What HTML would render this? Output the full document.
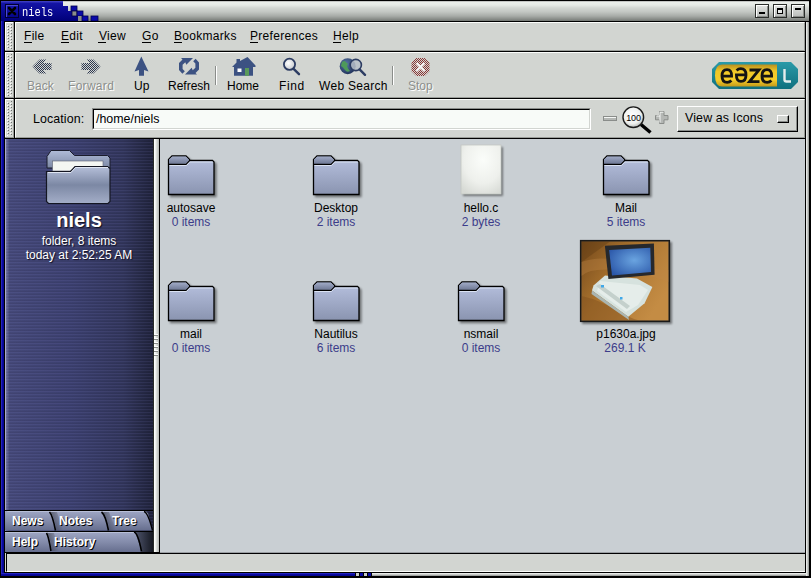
<!DOCTYPE html>
<html><head><meta charset="utf-8">
<style>
html,body{margin:0;padding:0;}
body{width:811px;height:578px;overflow:hidden;position:relative;background:#000;font-family:"Liberation Sans",sans-serif;font-size:12px;color:#000;}
.a{position:absolute;}
.t{position:absolute;white-space:nowrap;line-height:14px;}
.g{background:#d2d5d1;}
.hd{position:absolute;left:5px;width:9px;box-sizing:border-box;}
.u{text-decoration:underline;text-underline-offset:2px;}
</style></head><body>
<!-- outer frame -->
<div class="a" style="left:1px;top:1px;width:3px;height:575px;background:linear-gradient(90deg,#3a3acc,#0a0aa4 40%,#040488)"></div>
<div class="a" style="left:1px;top:573px;width:354px;height:3px;background:linear-gradient(#3232d0,#0808a0 50%,#040488)"></div>
<div class="a" style="left:356px;top:573px;width:3px;height:3px;background:#c8cbc8"></div>
<div class="a" style="left:360px;top:573px;width:3px;height:3px;background:#0a0aa8"></div>
<div class="a" style="left:364px;top:573px;width:3px;height:3px;background:#c8cbc8"></div>
<div class="a" style="left:368px;top:573px;width:3px;height:3px;background:#0a0aa8"></div>
<div class="a" style="left:372px;top:573px;width:437px;height:3px;background:linear-gradient(#f8faf8,#c8cbc8 50%,#8e918e)"></div>
<div class="a" style="left:806px;top:22px;width:3px;height:554px;background:linear-gradient(90deg,#f4f6f4,#c8cbc8 50%,#8e918e)"></div>

<!-- title bar -->
<div class="a" style="left:1px;top:1px;width:808px;height:20px;background:linear-gradient(#c4c6c4 0,#c4c6c4 1px,#eaeeea 1.5px,#e6eae6 4px,#d2d6d2 7px,#c2c6c2 11px,#a8aca8 15px,#8a8e8a 18px,#747874 20px)"></div>
<svg class="a" style="left:1px;top:1px" width="100" height="20" viewBox="1 1 100 20">
 <defs><linearGradient id="tb" x1="0" y1="0" x2="0" y2="1"><stop offset="0" stop-color="#4646c8"/><stop offset="0.12" stop-color="#1414a4"/><stop offset="0.5" stop-color="#0a0a94"/><stop offset="1" stop-color="#000078"/></linearGradient>
 <linearGradient id="tg" x1="0" y1="0" x2="0" y2="1"><stop offset="0" stop-color="#e8eae8"/><stop offset="1" stop-color="#9a9d9a"/></linearGradient></defs>
 <path d="M1 1H63V6H68V11H72V16H78V21H1Z" fill="url(#tb)"/>
 <rect x="71" y="6" width="6" height="5" fill="#0a0aa8" stroke="#000050" stroke-width="0.8"/>
 <rect x="72" y="11" width="5" height="5" fill="#8a8d8a" stroke="#000040" stroke-width="0.8"/>
 <rect x="77" y="11" width="6" height="5" fill="#0a0aa8" stroke="#000050" stroke-width="0.8"/>
 <rect x="78" y="16" width="4" height="5" fill="#8a8d8a"/>
 <rect x="82" y="16" width="6" height="5" fill="#0a0aa8" stroke="#000050" stroke-width="0.8"/>
 <rect x="91" y="16" width="7" height="5" fill="#0a0aa8" stroke="#000050" stroke-width="0.8"/>
</svg>
<!-- close button -->
<div class="a" style="left:5px;top:4px;width:14px;height:14px;box-sizing:border-box;border:1px solid #000030;box-shadow:inset 1px 1px 0 #4a4ad0;background:linear-gradient(#1818b0,#06068a)"></div>
<svg class="a" style="left:7px;top:6px" width="10" height="10" viewBox="0 0 10 10"><path d="M2 2L8 8M8 2L2 8" stroke="#000" stroke-width="2.6" stroke-linecap="round"/></svg>
<div class="t" style="left:22px;top:4px;font-family:'Liberation Mono',monospace;font-size:10.4px;color:#fff;line-height:14px;transform:scaleY(1.2);transform-origin:0 0">niels</div>
<!-- right buttons -->
<div class="a" style="left:755px;top:4px;width:14px;height:14px;box-sizing:border-box;border:1px solid #2a2d2a;box-shadow:inset 1px 1px 0 #fff,inset -1px -1px 0 #8a8d8a;background:linear-gradient(#e4e6e4,#b8bbb8)"></div>
<div class="a" style="left:759px;top:12px;width:6px;height:2px;background:#000"></div>
<div class="a" style="left:773px;top:4px;width:14px;height:14px;box-sizing:border-box;border:1px solid #2a2d2a;box-shadow:inset 1px 1px 0 #fff,inset -1px -1px 0 #8a8d8a;background:linear-gradient(#e4e6e4,#b8bbb8)"></div>
<div class="a" style="left:777px;top:8px;width:6px;height:6px;box-sizing:border-box;border:1px solid #000;border-top-width:2px;background:#e8eae8"></div>
<div class="a" style="left:791px;top:4px;width:14px;height:14px;box-sizing:border-box;border:1px solid #2a2d2a;box-shadow:inset 1px 1px 0 #fff,inset -1px -1px 0 #8a8d8a;background:linear-gradient(#e4e6e4,#b8bbb8)"></div>
<div class="a" style="left:795px;top:8px;width:6px;height:2px;background:#000"></div>

<!-- menubar -->
<div class="a g" style="left:15px;top:22px;width:790px;height:29px;box-sizing:border-box;border-top:1px solid #fbfdfb;border-left:1px solid #fbfdfb;border-bottom:1px solid #9a9d99;border-right:1px solid #9a9d99"></div>
<svg class="a" style="left:5px;top:22px" width="9" height="29"><defs><pattern id="hp22" x="0" y="0" width="9" height="3" patternUnits="userSpaceOnUse"><rect x="2" y="0" width="1" height="1" fill="#fff"/><rect x="3" y="1" width="1" height="1" fill="#6e716e"/><rect x="5" y="1" width="1" height="1" fill="#fff"/><rect x="6" y="2" width="1" height="1" fill="#6e716e"/></pattern></defs><rect width="9" height="29" fill="#d4d7d3"/><rect x="0" y="2" width="9" height="25" fill="url(#hp22)"/><rect width="1" height="29" fill="#fff"/><rect width="9" height="1" fill="#fff"/><rect x="8" y="0" width="1" height="29" fill="#9a9d99"/><rect x="0" y="28" width="9" height="1" fill="#9a9d99"/></svg>
<!-- toolbar -->
<div class="a g" style="left:15px;top:52px;width:790px;height:46px;box-sizing:border-box;border-top:1px solid #fbfdfb;border-left:1px solid #fbfdfb;border-bottom:1px solid #9a9d99;border-right:1px solid #9a9d99"></div>
<svg class="a" style="left:5px;top:52px" width="9" height="46"><defs><pattern id="hp52" x="0" y="0" width="9" height="3" patternUnits="userSpaceOnUse"><rect x="2" y="0" width="1" height="1" fill="#fff"/><rect x="3" y="1" width="1" height="1" fill="#6e716e"/><rect x="5" y="1" width="1" height="1" fill="#fff"/><rect x="6" y="2" width="1" height="1" fill="#6e716e"/></pattern></defs><rect width="9" height="46" fill="#d4d7d3"/><rect x="0" y="2" width="9" height="42" fill="url(#hp52)"/><rect width="1" height="46" fill="#fff"/><rect width="9" height="1" fill="#fff"/><rect x="8" y="0" width="1" height="46" fill="#9a9d99"/><rect x="0" y="45" width="9" height="1" fill="#9a9d99"/></svg>
<!-- location bar -->
<div class="a g" style="left:15px;top:99px;width:790px;height:39px;box-sizing:border-box;border-top:1px solid #fbfdfb;border-left:1px solid #fbfdfb;border-bottom:1px solid #9a9d99;border-right:1px solid #9a9d99"></div>
<svg class="a" style="left:5px;top:99px" width="9" height="39"><defs><pattern id="hp99" x="0" y="0" width="9" height="3" patternUnits="userSpaceOnUse"><rect x="2" y="0" width="1" height="1" fill="#fff"/><rect x="3" y="1" width="1" height="1" fill="#6e716e"/><rect x="5" y="1" width="1" height="1" fill="#fff"/><rect x="6" y="2" width="1" height="1" fill="#6e716e"/></pattern></defs><rect width="9" height="39" fill="#d4d7d3"/><rect x="0" y="2" width="9" height="35" fill="url(#hp99)"/><rect width="1" height="39" fill="#fff"/><rect width="9" height="1" fill="#fff"/><rect x="8" y="0" width="1" height="39" fill="#9a9d99"/><rect x="0" y="38" width="9" height="1" fill="#9a9d99"/></svg>

<!-- main: sidebar -->
<svg class="a" style="left:5px;top:139px" width="148" height="413" viewBox="5 139 148 413">
 <defs>
  <linearGradient id="sbh" x1="0" y1="0" x2="1" y2="0"><stop offset="0" stop-color="#7c80b0"/><stop offset="0.03" stop-color="#444878"/><stop offset="0.45" stop-color="#3b3f6e"/><stop offset="0.8" stop-color="#31355a"/><stop offset="1" stop-color="#1f223a"/></linearGradient>
  <pattern id="sbs" x="0" y="139" width="148" height="3" patternUnits="userSpaceOnUse"><rect width="148" height="1" fill="#8890e0" fill-opacity="0.10"/><rect y="2" width="148" height="1" fill="#000" fill-opacity="0.05"/></pattern>
  <linearGradient id="tabg" x1="0" y1="0" x2="0" y2="1"><stop offset="0" stop-color="#c8cee4"/><stop offset="0.07" stop-color="#9aa2c0"/><stop offset="0.55" stop-color="#8189a8"/><stop offset="1" stop-color="#666e8e"/></linearGradient>
  <linearGradient id="tabsh" x1="0" y1="0" x2="1" y2="0"><stop offset="0" stop-color="#000" stop-opacity="0.4"/><stop offset="1" stop-color="#000" stop-opacity="0"/></linearGradient><linearGradient id="darkr" x1="0" y1="0" x2="1" y2="0"><stop offset="0" stop-color="#50566e"/><stop offset="1" stop-color="#161922"/></linearGradient>
  <linearGradient id="bfold" x1="0" y1="0" x2="0" y2="1"><stop offset="0" stop-color="#b6c0da"/><stop offset="0.5" stop-color="#7c88a4"/><stop offset="1" stop-color="#a4aec8"/></linearGradient>
  <linearGradient id="bback" x1="0" y1="0" x2="0" y2="1"><stop offset="0" stop-color="#b0bcd8"/><stop offset="1" stop-color="#7c88a4"/></linearGradient>
 </defs>
 <rect x="5" y="139" width="148" height="392" fill="url(#sbh)"/>
 <rect x="5" y="139" width="148" height="392" fill="url(#sbs)"/>
 <rect x="5" y="139" width="1" height="392" fill="#a8a8cc"/>
 <!-- big folder -->
 <g>
  <path d="M47 156.5L51 150.5H69.5L74.5 155.5H107.5L110 158V168H47Z" fill="url(#bback)" stroke="#1a1c2c" stroke-width="1"/>
  <rect x="52.5" y="161" width="50.5" height="10" fill="#f4f6f2" stroke="#5a6070" stroke-width="0.6"/>
  <path d="M46.5 171.5H70.5L75 166.5H107.5L110 168.5V201.5L108 203.5H48.5L46.5 201.5Z" fill="url(#bfold)" stroke="#141622" stroke-width="1.2"/>
  <path d="M48 172.5H71L75.5 167.5H108" fill="none" stroke="#dfe5f2" stroke-width="1"/>
 </g>
 <!-- tabs row 2 -->
 <rect x="5" y="510" width="148" height="1" fill="#000"/><rect x="5" y="531" width="148" height="22" fill="#000"/>
 <path d="M5 532H153V552H5Z" fill="url(#tabg)"/>
 <path d="M135 532H153V552H142Z" fill="url(#darkr)"/>
 <path d="M46.5 533Q48.5 536 51 551" fill="none" stroke="#000" stroke-width="1.6"/>
 <path d="M47.5 533Q49.5 536 52 551H59L54 533Z" fill="url(#tabsh)"/>
 <path d="M134 532Q138 533 141.5 551.5" fill="none" stroke="#000" stroke-width="1.6"/>
 <rect x="5" y="552" width="148" height="1" fill="#8a8e98"/>
 <!-- tabs row 1 -->
 <path d="M5 514Q5 511 8 511H144Q147 511 148 513.5L152.5 530.5H5Z" fill="url(#tabg)"/>
 <path d="M49.5 512Q52.5 515 55.5 530.5" fill="none" stroke="#000" stroke-width="1.6"/>
 <path d="M50.5 512Q53.5 515 56.5 530.5H63L57 512Z" fill="url(#tabsh)"/>
 <path d="M101.5 512Q105.5 515 108.5 530.5" fill="none" stroke="#000" stroke-width="1.6"/>
 <path d="M102.5 512Q106.5 515 109.5 530.5H116L109 512Z" fill="url(#tabsh)"/>
 <path d="M144 511.5Q148 512.5 152.5 530.5" fill="none" stroke="#000" stroke-width="1.3"/>
</svg>
<div class="t" style="left:0;top:208px;width:158px;text-align:center;font-size:20px;line-height:24px;font-weight:bold;color:#fff;text-shadow:1px 1px 1px #101020">niels</div>
<div class="t" style="left:0;top:234px;width:158px;text-align:center;color:#fff;text-shadow:1px 1px 1px #101020">folder, 8 items</div>
<div class="t" style="left:0;top:248px;width:158px;text-align:center;color:#fff;text-shadow:1px 1px 1px #101020">today at 2:52:25 AM</div>
<div class="t" style="left:12px;top:514px;font-weight:bold;color:#fff;text-shadow:1px 1px 0 #000">News</div>
<div class="t" style="left:59px;top:514px;font-weight:bold;color:#fff;text-shadow:1px 1px 0 #000">Notes</div>
<div class="t" style="left:112px;top:514px;font-weight:bold;color:#fff;text-shadow:1px 1px 0 #000">Tree</div>
<div class="t" style="left:12px;top:535px;font-weight:bold;color:#fff;text-shadow:1px 1px 0 #000">Help</div>
<div class="t" style="left:54px;top:535px;font-weight:bold;color:#fff;text-shadow:1px 1px 0 #000">History</div>
<!-- splitter -->
<div class="a" style="left:153px;top:139px;width:6px;height:413px;background:linear-gradient(90deg,#2a2d2a 0,#2a2d2a 1px,#fcfefc 1px,#fcfefc 2px,#e4e7e4 3px,#b4b7b4 6px)"></div>
<svg class="a" style="left:154px;top:333px" width="5" height="28"><g fill="#fff"><rect x="0" y="1" width="4" height="1"/><rect x="0" y="5" width="4" height="1"/><rect x="0" y="9" width="4" height="1"/><rect x="0" y="13" width="4" height="1"/><rect x="0" y="17" width="4" height="1"/><rect x="0" y="21" width="4" height="1"/></g><g fill="#8a8d8a"><rect x="0" y="2" width="4" height="1"/><rect x="0" y="6" width="4" height="1"/><rect x="0" y="10" width="4" height="1"/><rect x="0" y="14" width="4" height="1"/><rect x="0" y="18" width="4" height="1"/><rect x="0" y="22" width="4" height="1"/></g></svg>
<!-- content -->
<div class="a" id="content" style="left:160px;top:139px;width:645px;height:413px;background:#c9cfd3"></div>
<svg class="a" style="left:160px;top:139px" width="645" height="413" viewBox="160 139 645 413">
 <defs>
  <linearGradient id="fbody" x1="0" y1="0" x2="0" y2="1"><stop offset="0" stop-color="#b8c2e0"/><stop offset="1" stop-color="#8a94b0"/></linearGradient>
  <linearGradient id="ftab" x1="0" y1="0" x2="0" y2="1"><stop offset="0" stop-color="#a0aac6"/><stop offset="1" stop-color="#6e7894"/></linearGradient>
  <radialGradient id="doc" cx="0.55" cy="0.3" r="0.8"><stop offset="0" stop-color="#fbfdfa"/><stop offset="0.6" stop-color="#eef0ec"/><stop offset="1" stop-color="#d6d9d4"/></radialGradient>
  <filter id="sh" x="-20%" y="-20%" width="150%" height="150%"><feGaussianBlur in="SourceAlpha" stdDeviation="1.3"/><feOffset dx="1.5" dy="1.5"/><feComponentTransfer><feFuncA type="linear" slope="0.45"/></feComponentTransfer><feMerge><feMergeNode/><feMergeNode in="SourceGraphic"/></feMerge></filter>
  <g id="folder">
   <path d="M168.5 160V159.5L172 156H186L189.5 159.5V160.5H212.5L214 162V194.5H168.5Z" fill="url(#fbody)" stroke="#000" stroke-width="1.3" filter="url(#sh)"/>
   <path d="M169 164V159.5L172.2 156.6H185.8L189 159.7L186 163.8Z" fill="url(#ftab)"/>
   <path d="M168.5 164.3H186L189.3 161" fill="none" stroke="#000" stroke-width="1.2"/>
   <path d="M169.5 165.5H186.5L189.8 162H212.8" fill="none" stroke="#dfe6f6" stroke-width="0.9"/>
  </g>
 </defs>
 <use href="#folder"/>
 <use href="#folder" x="145"/>
 <use href="#folder" x="435"/>
 <use href="#folder" y="126"/>
 <use href="#folder" x="145" y="126"/>
 <use href="#folder" x="290" y="126"/>
 <!-- hello.c -->
 <rect x="461" y="145" width="40" height="49" fill="url(#doc)" filter="url(#sh)"/>
 <rect x="461" y="145" width="40" height="49" fill="none" stroke="#c4c7c2" stroke-width="0.8"/>
 <!-- photo -->
 <rect x="580" y="240" width="90" height="82" fill="#2a2a2a" filter="url(#sh)"/>
 <defs>
  <linearGradient id="wood" x1="0" y1="0" x2="1" y2="0.6"><stop offset="0" stop-color="#74481a"/><stop offset="0.45" stop-color="#a8722e"/><stop offset="1" stop-color="#c48c44"/></linearGradient>
  <radialGradient id="scr" cx="0.6" cy="0.45" r="0.7"><stop offset="0" stop-color="#6aa4e0"/><stop offset="1" stop-color="#2a56a8"/></radialGradient>
  <linearGradient id="kb" x1="0" y1="0" x2="1" y2="1"><stop offset="0" stop-color="#e4ece8"/><stop offset="1" stop-color="#b8c4c0"/></linearGradient>
 </defs>
 <rect x="581.5" y="241.5" width="87" height="79" fill="url(#wood)"/>
 <path d="M581.5 262Q600 255 625 262T668.5 270V282Q640 272 615 270T581.5 276Z" fill="#c08848" opacity="0.35"/>
 <path d="M581.5 296Q600 300 620 312T650 320.5H581.5Z" fill="#7a4c1c" opacity="0.4"/>
 <path d="M581.5 241.5H610L581.5 262Z" fill="#5a3612" opacity="0.35"/>
 <path d="M593.5 285.5L605 275.5L637 278.4L652.4 286.9L644.6 303.2L628.3 316.7L592 290.4Z" fill="#d6e2de"/>
 <path d="M592 290.4L628.3 316.7L629 320L591.5 294Z" fill="#aab6b2"/>
 <path d="M600 281L640 285L648 290L638 305L626 312L597 291Z" fill="#e8f0ec" opacity="0.8"/>
 <path d="M596 286L627 309L630 306L600 284Z" fill="#c4d0cc"/>
 <rect x="601" y="285" width="3" height="2.5" fill="#40a8e8"/>
 <rect x="620" y="297" width="2.5" height="2.5" fill="#40a8e8"/>
 <path d="M604.9 245.7L653.9 243.5L654.6 274.8L608.4 279Z" fill="#26282c"/>
 <path d="M609.1 250L650.3 247.8L651 272L612 275.5Z" fill="url(#scr)"/>
 <rect x="580.5" y="240.5" width="89" height="81" fill="none" stroke="#1a1a1a" stroke-width="1.2"/>
</svg>
<div class="t" style="left:131px;top:201px;width:120px;text-align:center">autosave</div>
<div class="t" style="left:131px;top:215px;width:120px;text-align:center;color:#3c3c8a">0 items</div>
<div class="t" style="left:276px;top:201px;width:120px;text-align:center">Desktop</div>
<div class="t" style="left:276px;top:215px;width:120px;text-align:center;color:#3c3c8a">2 items</div>
<div class="t" style="left:421px;top:201px;width:120px;text-align:center">hello.c</div>
<div class="t" style="left:421px;top:215px;width:120px;text-align:center;color:#3c3c8a">2 bytes</div>
<div class="t" style="left:566px;top:201px;width:120px;text-align:center">Mail</div>
<div class="t" style="left:566px;top:215px;width:120px;text-align:center;color:#3c3c8a">5 items</div>
<div class="t" style="left:131px;top:327px;width:120px;text-align:center">mail</div>
<div class="t" style="left:131px;top:341px;width:120px;text-align:center;color:#3c3c8a">0 items</div>
<div class="t" style="left:276px;top:327px;width:120px;text-align:center">Nautilus</div>
<div class="t" style="left:276px;top:341px;width:120px;text-align:center;color:#3c3c8a">6 items</div>
<div class="t" style="left:421px;top:327px;width:120px;text-align:center">nsmail</div>
<div class="t" style="left:421px;top:341px;width:120px;text-align:center;color:#3c3c8a">0 items</div>
<div class="t" style="left:566px;top:327px;width:120px;text-align:center">p1630a.jpg</div>
<div class="t" style="left:565px;top:341px;width:120px;text-align:center;color:#3c3c8a">269.1 K</div>

<!-- status bar -->
<div class="a" style="left:5px;top:553px;width:800px;height:19px;background:#d2d5d1"></div>
<div class="a" style="left:6px;top:553px;width:799px;height:19px;box-sizing:border-box;border-top:1px solid #000;border-left:1px solid #000;border-bottom:1px solid #fbfdfb;background:#d2d5d1"></div>
<div class="a" style="left:160px;top:552px;width:645px;height:1px;background:#9a9ea2"></div>

<!-- menu text -->
<div class="t" style="left:24px;top:29px;letter-spacing:0.3px">File</div><div class="a" style="left:24px;top:42px;width:8px;height:1px;background:#000"></div>
<div class="t" style="left:61px;top:29px;letter-spacing:0.3px">Edit</div><div class="a" style="left:61px;top:42px;width:8px;height:1px;background:#000"></div>
<div class="t" style="left:99px;top:29px;letter-spacing:0.3px">View</div><div class="a" style="left:98px;top:42px;width:8px;height:1px;background:#000"></div>
<div class="t" style="left:142px;top:29px;letter-spacing:0.3px">Go</div><div class="a" style="left:142px;top:42px;width:9px;height:1px;background:#000"></div>
<div class="t" style="left:174px;top:29px;letter-spacing:0.3px">Bookmarks</div><div class="a" style="left:174px;top:42px;width:8px;height:1px;background:#000"></div>
<div class="t" style="left:250px;top:29px;letter-spacing:0.3px">Preferences</div><div class="a" style="left:250px;top:42px;width:8px;height:1px;background:#000"></div>
<div class="t" style="left:333px;top:29px;letter-spacing:0.3px">Help</div><div class="a" style="left:333px;top:42px;width:8px;height:1px;background:#000"></div>

<!-- toolbar -->
<svg class="a" style="left:15px;top:52px" width="790" height="46" viewBox="15 52 790 46">
 <defs>
  <pattern id="chk" x="0" y="0" width="2" height="2" patternUnits="userSpaceOnUse"><rect width="1" height="1" fill="#2e3850"/><rect x="1" y="1" width="1" height="1" fill="#2e3850"/></pattern>
  <pattern id="chkr" x="0" y="0" width="2" height="2" patternUnits="userSpaceOnUse"><rect width="1" height="1" fill="#8a3434"/><rect x="1" y="1" width="1" height="1" fill="#8a3434"/></pattern>
  <radialGradient id="lens" cx="0.4" cy="0.4" r="0.6"><stop offset="0" stop-color="#ffffff"/><stop offset="1" stop-color="#c8ccd0"/></radialGradient>
  <radialGradient id="globe" cx="0.4" cy="0.35" r="0.7"><stop offset="0" stop-color="#5a78a8"/><stop offset="1" stop-color="#1e3058"/></radialGradient>
 </defs>
 <!-- back -->
 <path d="M32.5 66.5L39.5 59.5L46.5 59.5L43 63H51.5V70H43L46.5 73.5H39.5Z" fill="url(#chk)"/>
 <!-- forward -->
 <path d="M100.5 66.5L93.5 59.5L86.5 59.5L90 63H81.5V70H90L86.5 73.5H93.5Z" fill="url(#chk)"/>
 <!-- up -->
 <path d="M141.3 56.5L148.5 71.5L144 70V75.8H139V70L134.5 71.5Z" fill="#3c5282"/>
 <!-- refresh -->
 <g fill="#3c5282"><path id="rfa" d="M181 58H193L186.3 64.7L185.3 62.2L182.6 64.8V69L184.8 71.3L182.4 73.8L179 70V63L182.5 59.5Z"/><path d="M181 58H193L186.3 64.7L185.3 62.2L182.6 64.8V69L184.8 71.3L182.4 73.8L179 70V63L182.5 59.5Z" transform="rotate(180 189 66.25)"/></g>
 <!-- separators -->
 <rect x="215" y="66" width="1" height="19" fill="#8a8d8a"/><rect x="216" y="66" width="1" height="19" fill="#ffffff"/>
 <rect x="392" y="66" width="1" height="19" fill="#8a8d8a"/><rect x="393" y="66" width="1" height="19" fill="#ffffff"/>
 <!-- home -->
 <g fill="#3c5282">
  <path d="M232 67L236.5 62.5V59H240V61L247.5 57L255.5 65.5V67H253V75.8H234V67Z"/>
 </g>
 <rect x="237.5" y="68.5" width="4" height="3.5" fill="#ffffff"/>
 <rect x="245" y="68" width="4" height="7.8" fill="#5a9a5a"/>
 <!-- find -->
 <circle cx="289.5" cy="64.3" r="5.6" fill="url(#lens)" stroke="#2c3c62" stroke-width="1.8"/>
 <path d="M293.6 68.8L299 74.2" stroke="#2c3c62" stroke-width="2.4" stroke-linecap="round"/>
 <!-- web search -->
 <circle cx="347.7" cy="66.2" r="8" fill="url(#globe)"/>
 <path d="M342 62Q345 60 346 62.5Q349 63 347 66Q348 69 350 71Q347 73 345 70Q343 67 341 66Z" fill="#4e9a5a"/>
 <circle cx="355.8" cy="65" r="5.6" fill="#b8c0c8" fill-opacity="0.85" stroke="#2c3c62" stroke-width="1.6"/>
 <path d="M359.6 69.4L365 74.8" stroke="#2c3c62" stroke-width="2.4" stroke-linecap="round"/>
 <!-- stop -->
 <path d="M416.3 58H424.7L429.5 62.8V71.2L424.7 76H416.3L411.5 71.2V62.8Z" fill="url(#chkr)"/>
 <path d="M416.5 63L424.5 71M424.5 63L416.5 71" stroke="#f4f4f4" stroke-width="2.2"/>
</svg>
<div class="t" style="left:27px;top:79px;color:#8c8f8c;text-shadow:1px 1px 0 #fff">Back</div>
<div class="t" style="left:68px;top:79px;color:#8c8f8c;text-shadow:1px 1px 0 #fff;letter-spacing:0.3px">Forward</div>
<div class="t" style="left:134px;top:79px">Up</div>
<div class="t" style="left:168px;top:79px">Refresh</div>
<div class="t" style="left:227px;top:79px">Home</div>
<div class="t" style="left:279px;top:79px;letter-spacing:0.6px">Find</div>
<div class="t" style="left:319px;top:79px;letter-spacing:0.3px">Web Search</div>
<div class="t" style="left:408px;top:79px;color:#8c8f8c;text-shadow:1px 1px 0 #fff">Stop</div>
<!-- eazel logo -->
<svg class="a" style="left:712px;top:62px" width="87" height="27" viewBox="0 0 87 27">
 <defs>
  <linearGradient id="yel" x1="0" y1="0" x2="0" y2="1"><stop offset="0" stop-color="#b89020"/><stop offset="0.3" stop-color="#f0c828"/><stop offset="0.7" stop-color="#f4cc2a"/><stop offset="1" stop-color="#c49a1a"/></linearGradient>
  <linearGradient id="teal" x1="0" y1="0" x2="0" y2="1"><stop offset="0" stop-color="#2a9aa8"/><stop offset="1" stop-color="#10707e"/></linearGradient>
 </defs>
 <path d="M7 0H79L86 7V20L79 27H7L0 20V7Z" fill="url(#teal)"/>
 <path d="M10 2.5H65V24.5H10Q3 24.5 3 13.5Q3 2.5 10 2.5Z" fill="url(#yel)"/>
 <g fill="none" stroke="#141414" stroke-width="2.8">
  <path d="M10.5 14.2H19.6Q19.8 7.6 15 7.6Q10 7.6 10 14Q10 20.4 15.2 20.4Q17.6 20.4 19.4 18.6"/>
  <path d="M33.5 12.8H24.4Q24.2 19.4 29 19.4Q34 19.4 34 13Q34 6.6 28.8 6.6Q26.4 6.6 24.6 8.4"/>
  <path d="M37.5 8H47L37.5 19.6H47.5"/>
  <path d="M50.5 14.2H59.6Q59.8 7.6 55 7.6Q50 7.6 50 14Q50 20.4 55.2 20.4Q57.6 20.4 59.4 18.6"/>
 </g>
 <path d="M72.5 7V17.5Q72.5 19.5 74.5 19.5H79" fill="none" stroke="#e4ecec" stroke-width="2.4"/>
</svg>

<!-- location bar -->
<div class="t" style="left:33px;top:112px;font-size:12.4px;letter-spacing:0.1px">Location:</div>
<div class="a" style="left:92px;top:108px;width:499px;height:22px;box-sizing:border-box;border-top:1px solid #8a8d8a;border-left:1px solid #8a8d8a;border-right:1px solid #fff;border-bottom:1px solid #fff;"></div>
<div class="a" style="left:93px;top:109px;width:497px;height:20px;box-sizing:border-box;border-top:1px solid #000;border-left:1px solid #000;border-right:1px solid #d2d5d1;border-bottom:1px solid #d2d5d1;background:#f8fbf8"></div>
<div class="t" style="left:96px;top:112px;font-size:12.4px">/home/niels</div>
<svg class="a" style="left:600px;top:104px" width="75" height="32" viewBox="600 104 75 32">
 <defs><radialGradient id="zl" cx="0.45" cy="0.4" r="0.6"><stop offset="0" stop-color="#ffffff"/><stop offset="0.7" stop-color="#eef0ee"/><stop offset="1" stop-color="#b8bbb8"/></radialGradient></defs>
 <rect x="603.5" y="116.5" width="13" height="4" fill="#b4b7b4" stroke="#8a8d8a" stroke-width="1"/><rect x="604" y="117" width="12" height="1" fill="#f4f6f4"/>
 <path d="M659.5 111.5H664V115.5H668V119.8H664V123.5H659.5V119.8H655.5V115.5H659.5Z" fill="#b4b7b4" stroke="#8a8d8a" stroke-width="1"/><path d="M660 122.5V116H656.5M660 116V112.2H663.5" fill="none" stroke="#f4f6f4" stroke-width="1"/>
 <path d="M641 124.5L650.5 132.5" stroke="#000" stroke-width="3.4"/>
 <circle cx="633.3" cy="117.2" r="10.3" fill="url(#zl)" stroke="#1a1a1a" stroke-width="1.4"/>
 <text x="633.5" y="120.5" font-family="Liberation Sans" font-size="9" text-anchor="middle" fill="#000" letter-spacing="-0.2">100</text>
</svg>
<div class="a" style="left:677px;top:106px;width:121px;height:26px;box-sizing:border-box;border-top:1px solid #fff;border-left:1px solid #fff;border-right:1px solid #000;border-bottom:1px solid #000;box-shadow:inset -1px -1px 0 #8a8d8a;background:#d2d5d1"></div>
<div class="t" style="left:685px;top:111px;font-size:12.4px;letter-spacing:0.15px">View as Icons</div>
<div class="a" style="left:777px;top:115px;width:12px;height:8px;box-sizing:border-box;border-top:1px solid #fff;border-left:1px solid #fff;border-right:1px solid #000;border-bottom:1px solid #000;box-shadow:inset -1px -1px 0 #8a8d8a;background:#d2d5d1"></div>

</body></html>
